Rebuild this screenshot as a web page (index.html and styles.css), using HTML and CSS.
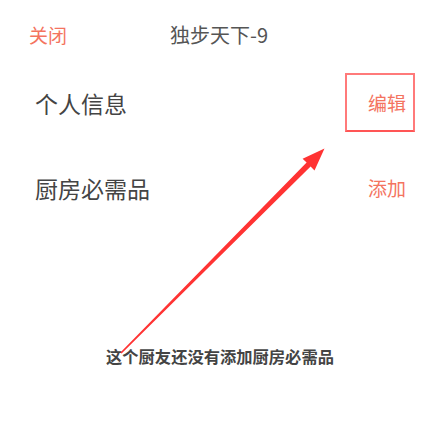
FILE: index.html
```html
<!DOCTYPE html>
<html>
<head>
    <link rel="stylesheet" href="styles.css">
</head>
<body>
    <div class="page">
        <div class="header">
            <span class="close">关闭</span>
            <span class="title">独步天下-9</span>
        </div>

        <div class="row">
            <span class="label">个人信息</span>
            <span class="action marked">编辑</span>
        </div>
        <div class="row">
            <span class="label">厨房必需品</span>
            <span class="action">添加</span>
        </div>

        <div class="empty">这个厨友还没有添加厨房必需品</div>

        <!-- annotation arrow -->
        <svg class="arrow" width="433" height="421" viewBox="0 0 433 421">
            <polygon fill="#ff3333" points="120.4,352.6 121.6,353.4 310.6,166.6 314.5,170.4 324.5,148.5 302.6,158.8 306.6,162.6"/>
        </svg>
    </div>
</body>
</html>
```

FILE: styles.css
```css
body {
    margin: 0;
    background-color: white;
    font-family: "Noto Sans CJK SC", "Noto Sans", sans-serif;
}
.page {
    position: relative;
    width: 433px;
    height: 421px;
    overflow: hidden;
}
.header {
    display: flex;
    align-items: center;
    height: 22px;
    padding: 23px 0 15px 29px;
    font-size: 19px;
}
.close {
    color: #f4745f;
}
.title {
    margin-left: 103px;
    font-size: 20px;
    color: #555;
}
.row {
    display: flex;
    justify-content: space-between;
    align-items: center;
    height: 85px;
    padding: 0 18px 0 35px;
}
.label {
    font-size: 23px;
    color: #444;
}
.action {
    font-size: 19px;
    line-height: 22px;
    color: #f4745f;
    padding: 17px 7px 16px 21px;
    border: 2px solid transparent;
}
.action.marked {
    border-color: #ff7a7a;
    border-bottom-color: #ff5555;
}
.empty {
    margin-top: 116px;
    padding-left: 7px;
    text-align: center;
    font-size: 16.3px;
    line-height: 20px;
    font-weight: bold;
    color: #444;
}
.arrow {
    position: absolute;
    left: 0;
    top: 0;
    pointer-events: none;
}
```
